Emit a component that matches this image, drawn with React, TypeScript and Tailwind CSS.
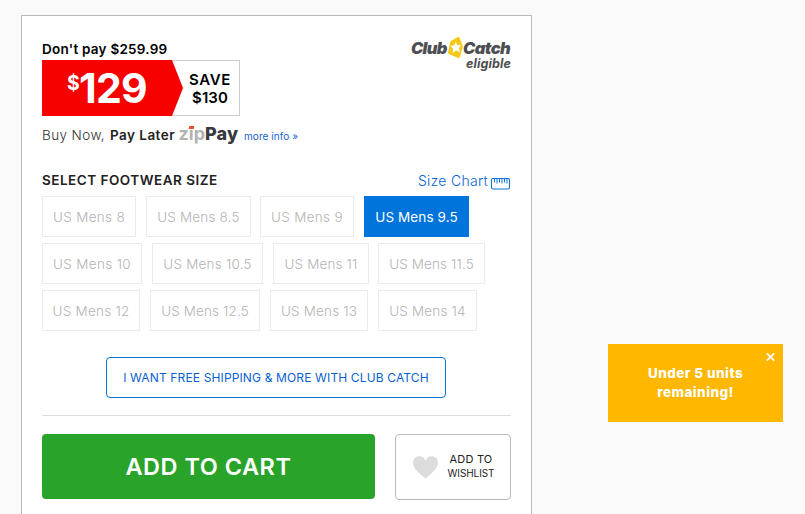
import { clsx } from 'clsx';

type Size = { label: string; box: string; tracking: string; selected?: boolean };

const sizeRows: Size[][] = [
  [
    { label: 'US Mens 8', box: 'w-[94px]', tracking: 'tracking-[0.31px]' },
    { label: 'US Mens 8.5', box: 'w-[105px] ml-2.5', tracking: 'tracking-[0.18px]' },
    { label: 'US Mens 9', box: 'w-[94px] ml-[9px]', tracking: 'tracking-[0.31px]' },
    { label: 'US Mens 9.5', box: 'w-[105px] ml-2.5', tracking: 'tracking-[0.1px]', selected: true },
  ],
  [
    { label: 'US Mens 10', box: 'w-[100px]', tracking: 'tracking-[0.34px]' },
    { label: 'US Mens 10.5', box: 'w-[111px] ml-2.5', tracking: 'tracking-[0.22px]' },
    { label: 'US Mens 11', box: 'w-[96px] ml-2.5', tracking: 'tracking-[0.14px]' },
    { label: 'US Mens 11.5', box: 'w-[107px] ml-[9px]', tracking: 'tracking-[0.11px]' },
  ],
  [
    { label: 'US Mens 12', box: 'w-[98px]', tracking: 'tracking-[0.25px]' },
    { label: 'US Mens 12.5', box: 'w-[110px] ml-2.5', tracking: 'tracking-[0.11px]' },
    { label: 'US Mens 13', box: 'w-[98px] ml-2.5', tracking: 'tracking-[0.17px]' },
    { label: 'US Mens 14', box: 'w-[99px] ml-2.5', tracking: 'tracking-[0.17px]' },
  ],
];

function ClubCatchLogo() {
  return (
    <div className="mt-5 flex w-[100px] flex-col text-[#4d4e50]">
      <div className="flex h-[23px] items-start text-[16.5px] leading-6 font-black italic">
        <span className="w-[37px] tracking-[-0.75px]">Club</span>
        <svg className="h-[23px] w-[15px] shrink-0" viewBox="0 0 15 23">
          <path d="M2.5 5.2 9.8 1Q11 .4 11.5 1.7L14.9 10 11.9 21Q11.6 22.6 10.2 22L1 18Q-.3 17.5 0 16Z" fill="#f6c815" />
          <path d="M7.7 5.8 9.3 9.2 13.4 8.9 10.8 12.2 12.2 16.4 8.3 14.5 4.6 16.9 5.1 12.7 2.4 10 6.3 9.2Z" fill="#fff" />
        </svg>
        <span className="tracking-[-0.6px]">Catch</span>
      </div>
      <div className="-mt-1 self-end text-[12.5px] leading-[18px] font-bold tracking-[0.1px] italic">eligible</div>
    </div>
  );
}

function Price() {
  return (
    <div className="mt-px flex h-14 w-[198px] border border-[#ccc]">
      <div className="-my-px -ml-px flex h-14 w-[141px] shrink-0 bg-[#f60000] pl-[25px] font-bold text-white [clip-path:polygon(0_0,130px_0,141px_50%,130px_100%,0_100%)]">
        <span className="w-3 text-[19.5px] leading-[46px]">$</span>
        <span className="text-[41px] leading-14 tracking-[-0.8px]">129</span>
      </div>
      <div className="flex w-[54px] flex-col items-center justify-center pt-px text-[15px] leading-[18px] font-semibold text-black">
        <span className="tracking-[0.7px]">SAVE</span>
        <span className="tracking-[0.1px]">$130</span>
      </div>
    </div>
  );
}

function PayLater() {
  return (
    <div className="mt-[9px] flex h-5 text-[13.5px] leading-5 whitespace-nowrap text-[#333]">
      <span className="w-[68px] font-light tracking-[0.4px]">Buy Now,</span>
      <span className="w-[68.5px] font-semibold tracking-[0.46px] text-[#222]">Pay Later</span>
      <span className="relative w-[26.5px] text-[18px] leading-[17px] font-bold text-[#b3b3b3]">
        zip
        <i className="absolute top-px left-[10px] h-[3px] w-[5px] -skew-x-12 bg-[#f04e23]" />
      </span>
      <span className="w-[39px] text-[18px] leading-[17px] font-extrabold tracking-[0.2px] text-[#36393e]">Pay</span>
      <a className="text-[10px] leading-[23px] tracking-[0.06px] text-[#1663d0]">more info »</a>
    </div>
  );
}

function RulerIcon() {
  return (
    <svg className="mt-[7.5px] ml-[3px] h-3 w-[19px]" viewBox="0 0 19 12" fill="none" stroke="#0a72d8">
      <rect x=".5" y=".5" width="18" height="10.5" rx="1.5" strokeWidth="1.1" />
      <path d="M3.5 1v3.5M6 1v4.5M8.5 1v3.5M11 1v4.5M13.5 1v3.5M16 1v4.5" strokeWidth="1" />
    </svg>
  );
}

export default function App() {
  return (
    <div className="flex h-[514px] w-[805px] items-start overflow-hidden bg-[#fafafa] font-['Inter',sans-serif]">
      <main className="mt-[15px] ml-[21px] h-[520px] w-[511px] shrink-0 border border-[#bbb] bg-white px-5">
        <div className="flex items-start justify-between">
          <div className="pt-[23px]">
            <div className="h-5 text-[13.5px] leading-5 font-semibold tracking-[0.24px] text-black">Don't pay $259.99</div>
            <Price />
          </div>
          <ClubCatchLogo />
        </div>
        <PayLater />

        <div className="mt-[25px] flex h-5 justify-between leading-5">
          <h2 className="text-[13.5px] font-semibold tracking-[0.5px] text-[#222]">SELECT FOOTWEAR SIZE</h2>
          <a className="mr-px flex text-[14px] leading-[22px] font-light tracking-[0.29px] text-[#0a64d0]">
            Size Chart
            <RulerIcon />
          </a>
        </div>

        <div className="mt-1.5 flex flex-col gap-1.5">
          {sizeRows.map((row) => (
            <div key={row[0].label} className="flex">
              {row.map((s) => (
                <button
                  key={s.label}
                  className={clsx(
                    'h-[41px] shrink-0 border text-center text-[13.5px] leading-10 whitespace-nowrap',
                    s.selected ? 'border-[#0074db] bg-[#0074db] text-white' : 'border-[#ebebeb] font-light text-[#b4b4b4]',
                    s.box,
                    s.tracking,
                  )}
                >
                  {s.label}
                </button>
              ))}
            </div>
          ))}
        </div>

        <button className="mt-[26px] ml-16 block h-[41px] w-[340px] rounded border border-[#0a72d8] text-[12px] leading-10 tracking-[0.14px] whitespace-nowrap text-[#0a5fd0]">
          I WANT FREE SHIPPING &amp; MORE WITH CLUB CATCH
        </button>

        <hr className="mt-[17px] border-[#ddd]" />

        <div className="mt-[18px] flex justify-between">
          <button className="h-[65px] w-[333px] rounded bg-[#29a329] text-[23.5px] leading-[65px] font-semibold tracking-[0.51px] text-white">
            ADD TO CART
          </button>
          <button className="flex h-[66px] w-[116px] items-center rounded border border-[#bbb] pl-[17px] text-[#222]">
            <svg className="h-[23px] w-[25px]" viewBox="0 0 25 23" fill="#dcdcdc">
              <path d="M12.5 22.5C8.5 19 0 13.5 0 6.8 0 3 2.7.3 6.2.3 9.4.3 11.6 2.2 12.5 4.8 13.4 2.2 15.6.3 18.8.3 22.3.3 25 3 25 6.8 25 13.5 16.5 19 12.5 22.5Z" />
            </svg>
            <span className="mb-[2px] ml-[9px] flex w-[48px] flex-col items-center leading-[14px]">
              <span className="text-[11px] tracking-[0.21px]">ADD TO</span>
              <span className="text-[10px] tracking-[-0.08px]">WISHLIST</span>
            </span>
          </button>
        </div>
      </main>

      <aside className="mt-[344px] ml-[76px] flex h-[78px] w-[175px] shrink-0 flex-col bg-[#ffb700] text-white">
        <svg className="mt-[9px] mr-2 h-2 w-[9px] self-end" viewBox="0 0 9 8" stroke="#fff" strokeWidth="1.8">
          <path d="M.8.4 8.2 7.6M8.2.4.8 7.6" />
        </svg>
        <p className="mt-[2.5px] text-center text-[13.5px] leading-[19px] font-extrabold tracking-[0.46px]">
          Under 5 units
          <br />
          remaining!
        </p>
      </aside>
    </div>
  );
}
